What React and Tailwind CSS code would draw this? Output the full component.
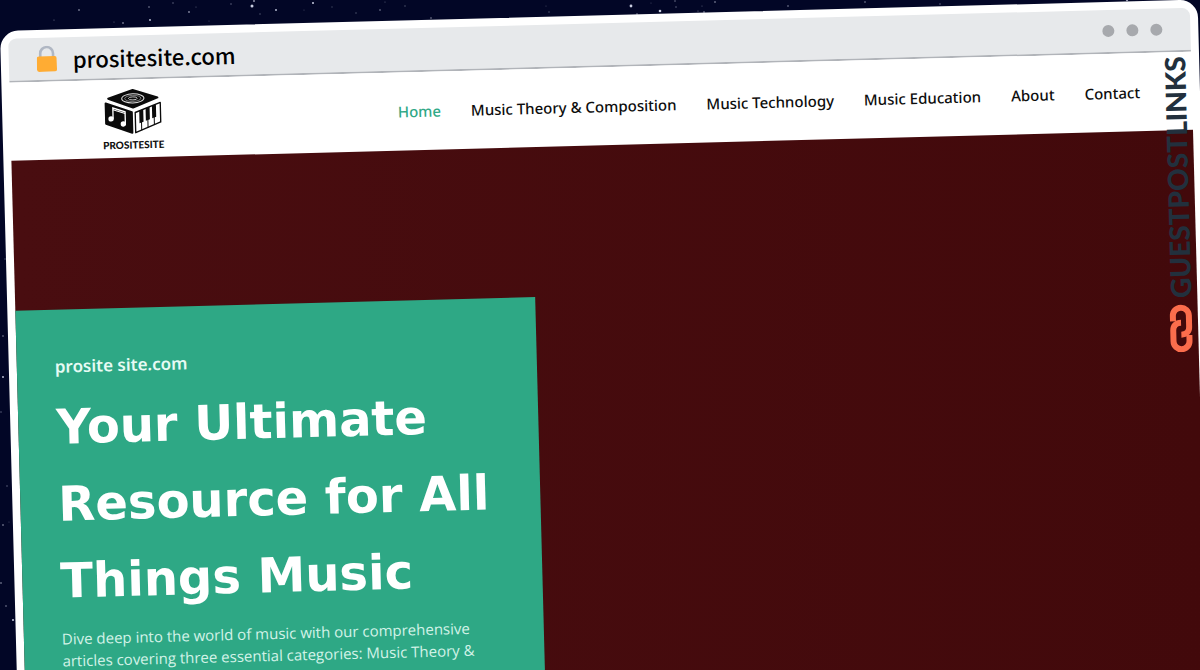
// src/App.jsx

const NAV_ITEMS = [
  { label: 'Home', active: true },
  { label: 'Music Theory & Composition' },
  { label: 'Music Technology' },
  { label: 'Music Education' },
  { label: 'About' },
  { label: 'Contact' },
];

// x, y, radius, opacity
const STARS = [
  [54, 20, 0.6, 0.5], [79, 10, 0.8, 0.8], [114, 22, 0.6, 0.4], [123, 23, 0.8, 0.8],
  [149, 7, 0.8, 0.6], [150, 20, 0.9, 0.9], [173, 3, 0.7, 0.5], [189, 12, 0.9, 0.6],
  [196, 7, 0.6, 0.4], [209, 21, 0.6, 0.3], [231, 4, 0.7, 0.5], [252, 6, 1.5, 0.9],
  [254, 1, 0.9, 0.7], [260, 14, 0.7, 0.4], [276, 10, 1, 0.8], [304, 10, 0.6, 0.3],
  [313, 3, 1, 0.9], [332, 7, 0.7, 0.3], [356, 13, 0.7, 0.4], [380, 10, 0.8, 0.6],
  [385, 2, 0.6, 0.4], [405, 6, 0.7, 0.4], [431, 18, 0.8, 0.6], [546, 6, 0.6, 0.3],
  [549, 12, 0.7, 0.4], [631, 6, 1.4, 0.9], [637, 14, 0.8, 0.6], [651, 3, 0.6, 0.3],
  [660, 11, 1.3, 0.9], [675, 1, 0.7, 0.6], [676, 7, 0.7, 0.5], [698, 11, 0.6, 0.5],
  [702, 6, 0.6, 0.4], [704, 12, 0.8, 0.7], [715, 2, 0.8, 0.7], [788, 6, 0.8, 0.6],
  [865, 2, 0.8, 0.6], [940, 4, 0.7, 0.5], [1127, 0, 1.2, 0.7],
  [5, 259, 0.7, 0.4], [3, 336, 0.8, 0.6], [3, 377, 0.9, 0.9], [1, 412, 0.8, 0.4],
  [7, 486, 0.8, 0.4], [3, 525, 0.8, 0.7], [9, 522, 0.6, 0.3], [1, 583, 0.8, 0.7],
  [6, 606, 0.8, 0.6], [13, 620, 1, 0.9],
];

function StarField() {
  return (
    <svg className="absolute inset-0 w-full h-full" aria-hidden="true">
      {STARS.map(([x, y, r, o]) => (
        <circle key={`${x}-${y}`} cx={x} cy={y} r={r} fill="#dfe3f5" opacity={o} />
      ))}
    </svg>
  );
}

function LockIcon() {
  return (
    <svg className="w-5 h-[26px]" viewBox="0 0 20 26" aria-hidden="true">
      <path d="M3.6 12V7.6a6.4 6.4 0 0 1 12.8 0V12" fill="none" stroke="#b0b7c3" strokeWidth="2.6" />
      <rect x="0" y="10.4" width="20" height="15.6" rx="2.2" fill="#ffac33" />
    </svg>
  );
}

// Cube with a speaker on top, notes on the left and piano keys on the right
function CubeLogo() {
  return (
    <svg className="w-[58px] h-[46px]" viewBox="0 0 172 136" aria-hidden="true">
      <g fill="#0b0b0b" stroke="#0b0b0b" strokeWidth="6" strokeLinejoin="round">
        <path d="M13 28 86 4 159 28 86 56Z" />
        <path d="M5 42 82 70V131L5 102Z" />
      </g>
      <g fill="none" stroke="#ddd">
        <ellipse cx="86" cy="29" rx="33" ry="13.5" strokeWidth="3" />
        <ellipse cx="86" cy="29" rx="24" ry="9" strokeWidth="1.5" />
        <ellipse cx="86" cy="29" rx="13" ry="4.5" strokeWidth="2.5" />
      </g>
      <path d="M26 88V56L62 68V104" fill="none" stroke="#fff" strokeWidth="4" />
      <path d="M26 61 62 73" stroke="#fff" strokeWidth="3" />
      <ellipse cx="20" cy="88" rx="8" ry="8" fill="#fff" />
      <ellipse cx="56" cy="104" rx="8" ry="8" fill="#fff" />
      <path d="M92 71 167 43V101L92 131Z" fill="#fff" stroke="#0b0b0b" strokeWidth="4" strokeLinejoin="round" />
      <path d="M110 64V124M129 57V117M148 50V109" stroke="#0b0b0b" strokeWidth="3" />
      <path d="M104 66 116 62V99L104 103ZM123 59 135 55V92L123 96ZM142 52 154 48V85L142 89Z" fill="#0b0b0b" />
    </svg>
  );
}

function ChainIcon() {
  return (
    <svg className="w-6 h-12" viewBox="0 0 24 48" fill="none" stroke="#fb6d4c" strokeWidth="6" aria-hidden="true">
      <path d="M4 17V11.5a8 8 0 0 1 16 0V23c0 4.5-3 7.5-8 7.5" />
      <path d="M12 18.5c-5 0-8 3-8 7.5V37a8 8 0 0 0 16 0V31" />
    </svg>
  );
}

function AddressBar() {
  return (
    <div className="h-11 flex items-center justify-between px-7 bg-[#e7e9eb] border-b-2 border-[#b1b4b9] rounded-t-lg">
      <div className="flex items-center gap-4">
        <LockIcon />
        <span className="text-[22px] leading-7 font-medium text-black font-['Noto_Sans_CJK_SC',sans-serif]">
          prositesite.com
        </span>
      </div>
      <div className="flex gap-3">
        <span className="size-3 rounded-full bg-[#a7a9ad]" />
        <span className="size-3 rounded-full bg-[#a7a9ad]" />
        <span className="size-3 rounded-full bg-[#a7a9ad]" />
      </div>
    </div>
  );
}

function SiteHeader() {
  return (
    <header className="h-[78px] flex items-center justify-between pl-[92px] pr-[52px] bg-white">
      <a href="#home" className="flex flex-col items-center gap-1 pt-0.5 text-[#111]">
        <CubeLogo />
        <span className="text-[10px] leading-3 font-black font-[Lato,sans-serif]">PROSITESITE</span>
      </a>
      <nav className="flex gap-[30px] text-[15px] leading-5 font-medium font-['Noto_Sans',sans-serif]">
        {NAV_ITEMS.map((item) => (
          <a
            key={item.label}
            href="#"
            className={item.active ? 'text-[#2fa886]' : 'text-[#0d0d0d]'}
          >
            {item.label}
          </a>
        ))}
      </nav>
    </header>
  );
}

function Hero() {
  return (
    <main className="flex-1 flex items-stretch pt-[150px] bg-linear-to-r from-[#490d10] to-[#42090b]">
      <section className="w-[44%] pt-[45px] pl-[38px] pr-8 bg-[#2ea885] text-white">
        <p className="text-[17px] leading-6 font-semibold text-[#e6fbf4] font-['Noto_Sans',sans-serif]">
          prosite site.com
        </p>
        <h1 className="mt-2.5 text-[48px] leading-[77px] font-bold font-['DejaVu_Sans',sans-serif]">
          Your Ultimate Resource for All Things Music
        </h1>
        <p className="mt-2 text-[15px] leading-[22px] font-medium text-[#d3f3e8] font-['Open_Sans',sans-serif]">
          Dive deep into the world of music with our comprehensive articles
          covering three essential categories: Music Theory &amp;
        </p>
      </section>
    </main>
  );
}

// Vertical brand mark that lies over the right edge of the page
function Watermark() {
  return (
    <div className="absolute top-12 right-[3px] flex flex-col items-center gap-1.5">
      <span className="[writing-mode:vertical-rl] rotate-180 text-[28px] leading-7 font-black text-[#22303d] font-[Lato,sans-serif]">
        GUESTPOSTLINKS
      </span>
      <ChainIcon />
    </div>
  );
}

export default function App() {
  return (
    <div className="relative h-screen overflow-hidden bg-[#020626]">
      <StarField />
      <div className="relative mt-[31px] mr-0.5 min-h-[110vh] flex flex-col origin-top-left -rotate-[1.5deg] rounded-[18px] border-8 border-white bg-white">
        <AddressBar />
        <SiteHeader />
        <Hero />
        <Watermark />
      </div>
    </div>
  );
}
